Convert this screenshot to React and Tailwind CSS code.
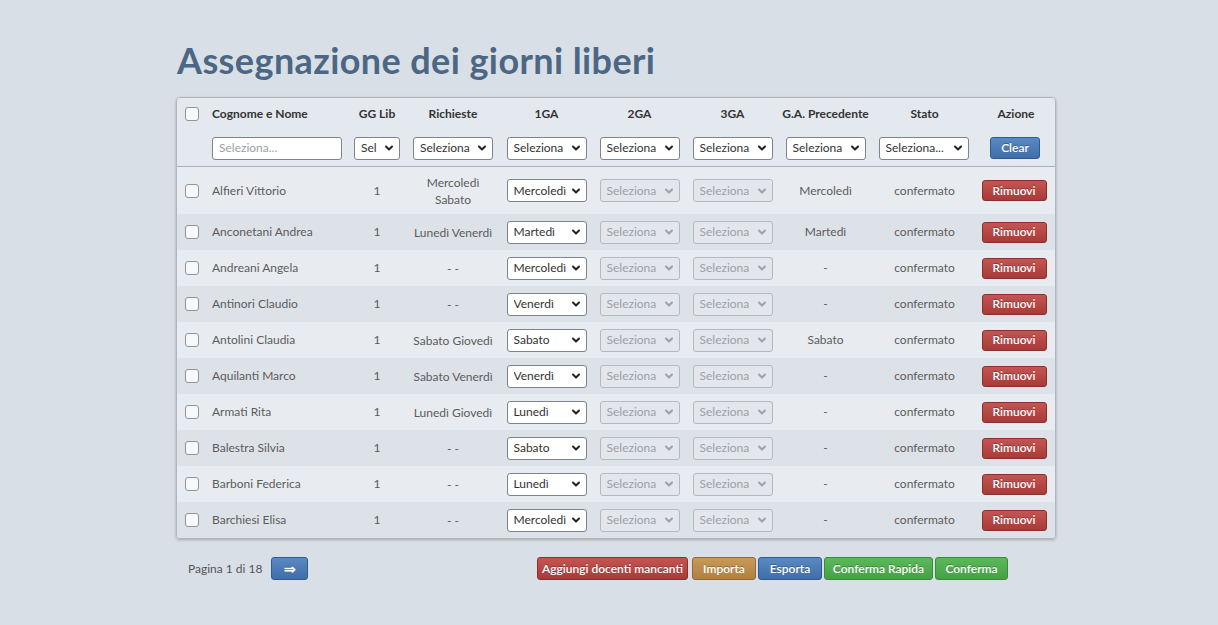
import { ChevronDown } from 'lucide-react';

const rows = [
  { name: 'Alfieri Vittorio', gg: '1', req: ['Mercoledì', 'Sabato'], ga1: 'Mercoledì', prev: 'Mercoledì' },
  { name: 'Anconetani Andrea', gg: '1', req: ['Lunedì Venerdì'], ga1: 'Martedì', prev: 'Martedì' },
  { name: 'Andreani Angela', gg: '1', req: ['- -'], ga1: 'Mercoledì', prev: '-' },
  { name: 'Antinori Claudio', gg: '1', req: ['- -'], ga1: 'Venerdì', prev: '-' },
  { name: 'Antolini Claudia', gg: '1', req: ['Sabato Giovedì'], ga1: 'Sabato', prev: 'Sabato' },
  { name: 'Aquilanti Marco', gg: '1', req: ['Sabato Venerdì'], ga1: 'Venerdì', prev: '-' },
  { name: 'Armati Rita', gg: '1', req: ['Lunedì Giovedì'], ga1: 'Lunedì', prev: '-' },
  { name: 'Balestra Silvia', gg: '1', req: ['- -'], ga1: 'Sabato', prev: '-' },
  { name: 'Barboni Federica', gg: '1', req: ['- -'], ga1: 'Lunedì', prev: '-' },
  { name: 'Barchiesi Elisa', gg: '1', req: ['- -'], ga1: 'Mercoledì', prev: '-' },
];

const grid = 'grid grid-cols-[28px_143px_58px_94px_93px_93px_93px_93px_105px_78px] items-center';

function Checkbox() {
  return <div className="w-[14px] h-[14px] rounded-[3px] border border-[#8d949b] bg-[#f7f8fa]" />;
}

function Select({ label, width = 'w-[80px]', disabled = false }) {
  return (
    <div
      className={`${width} h-[23px] flex items-center justify-between pl-[6px] pr-[4px] rounded-[3px] border text-[12px] ${
        disabled
          ? 'bg-[#e3e6ea] border-[#b4b9bf] text-[#9ba1a8]'
          : 'bg-white border-[#7d848b] text-[#333]'
      }`}
    >
      <span className="truncate">{label}</span>
      <ChevronDown size={12} strokeWidth={4} className={disabled ? 'text-[#9ba1a8] shrink-0' : 'text-[#222] shrink-0'} />
    </div>
  );
}

function Btn({ children, color, className = '' }) {
  const colors = {
    red: 'bg-gradient-to-b from-[#c45553] to-[#a83a37] border-[#8c2e2c]',
    blue: 'bg-gradient-to-b from-[#5b89c2] to-[#3f6ea8] border-[#2f5a8f]',
    brown: 'bg-gradient-to-b from-[#c79a59] to-[#b08040] border-[#93693a]',
    green: 'bg-gradient-to-b from-[#5bb95b] to-[#44a044] border-[#398a39]',
  };
  return (
    <div
      className={`flex items-center justify-center rounded-[3px] border text-white text-[12px] font-semibold ${colors[color]} ${className}`}
      style={{ textShadow: '0 -1px 0 rgba(0,0,0,0.25)' }}
    >
      {children}
    </div>
  );
}

export default function App() {
  return (
    <div className="min-h-[625px] bg-[#d9dfe6] pl-[176px] pt-[36px]" style={{ fontFamily: 'Lato, "Open Sans", sans-serif' }}>
      <h1 className="text-[36px] leading-[48px] font-bold text-[#4c6784] tracking-[0.4px] mb-[13px] ml-[1px]">
        Assegnazione dei giorni liberi
      </h1>

      <div className="w-[880px] rounded-[4px] border border-[#aeb7c1] shadow-[0_1px_3px_rgba(0,0,0,0.25)] overflow-hidden">
        <div className="bg-[#e4e9ef] border-b border-[#9fb2c7]">
          <div className={`${grid} h-[32px] text-[12px] font-bold text-[#333] text-center`}>
            <div className="flex justify-center pl-[2px]"><Checkbox /></div>
            <div className="text-left pl-[7px]">Cognome e Nome</div>
            <div>GG Lib</div>
            <div>Richieste</div>
            <div>1GA</div>
            <div>2GA</div>
            <div>3GA</div>
            <div>G.A. Precedente</div>
            <div>Stato</div>
            <div>Azione</div>
          </div>
          <div className={`${grid} h-[36px]`}>
            <div />
            <div className="pl-[7px]">
              <div className="w-[130px] h-[23px] rounded-[3px] border border-[#7d848b] bg-white text-[12px] text-[#9a9fa5] pl-[6px] flex items-center">
                Seleziona...
              </div>
            </div>
            <div className="flex justify-center"><Select label="Sel" width="w-[46px]" /></div>
            <div className="flex justify-center"><Select label="Seleziona" /></div>
            <div className="flex justify-center"><Select label="Seleziona" /></div>
            <div className="flex justify-center"><Select label="Seleziona" /></div>
            <div className="flex justify-center"><Select label="Seleziona" /></div>
            <div className="flex justify-center"><Select label="Seleziona" /></div>
            <div className="flex justify-center pr-[2px]"><Select label="Seleziona..." width="w-[90px]" /></div>
            <div className="flex justify-center pr-[2px]">
              <Btn color="blue" className="w-[50px] h-[22px]">Clear</Btn>
            </div>
          </div>
        </div>

        {rows.map((r, i) => (
          <div
            key={r.name}
            className={`${grid} ${i === 0 ? 'h-[47px]' : 'h-[36px]'} ${i % 2 === 0 ? 'bg-[#e8ecf1]' : 'bg-[#dde2e8]'} text-[12px] text-[#5c5c5c] text-center`}
          >
            <div className="flex justify-center pl-[2px]"><Checkbox /></div>
            <div className="text-left pl-[7px]">{r.name}</div>
            <div>{r.gg}</div>
            <div className="leading-[17px]">
              {r.req.map((t) => (
                <div key={t}>{t}</div>
              ))}
            </div>
            <div className="flex justify-center"><Select label={r.ga1} /></div>
            <div className="flex justify-center"><Select label="Seleziona" disabled /></div>
            <div className="flex justify-center"><Select label="Seleziona" disabled /></div>
            <div>{r.prev}</div>
            <div>confermato</div>
            <div className="flex justify-center pr-[4px]">
              <Btn color="red" className="w-[65px] h-[21px]">Rimuovi</Btn>
            </div>
          </div>
        ))}
      </div>

      <div className="w-[880px] flex items-center justify-between mt-[18px] pl-[12px] pr-[48px]">
        <div className="flex items-center gap-[9px] text-[12px] text-[#555]">
          <span>Pagina 1 di 18</span>
          <Btn color="blue" className="w-[37px] h-[23px] text-[14px]">⇒</Btn>
        </div>
        <div className="flex items-center gap-[2px]">
          <Btn color="red" className="w-[151px] h-[23px] mr-[2px]">Aggiungi docenti mancanti</Btn>
          <Btn color="brown" className="w-[64px] h-[23px]">Importa</Btn>
          <Btn color="blue" className="w-[64px] h-[23px]">Esporta</Btn>
          <Btn color="green" className="w-[109px] h-[23px]">Conferma Rapida</Btn>
          <Btn color="green" className="w-[73px] h-[23px]">Conferma</Btn>
        </div>
      </div>
    </div>
  );
}
